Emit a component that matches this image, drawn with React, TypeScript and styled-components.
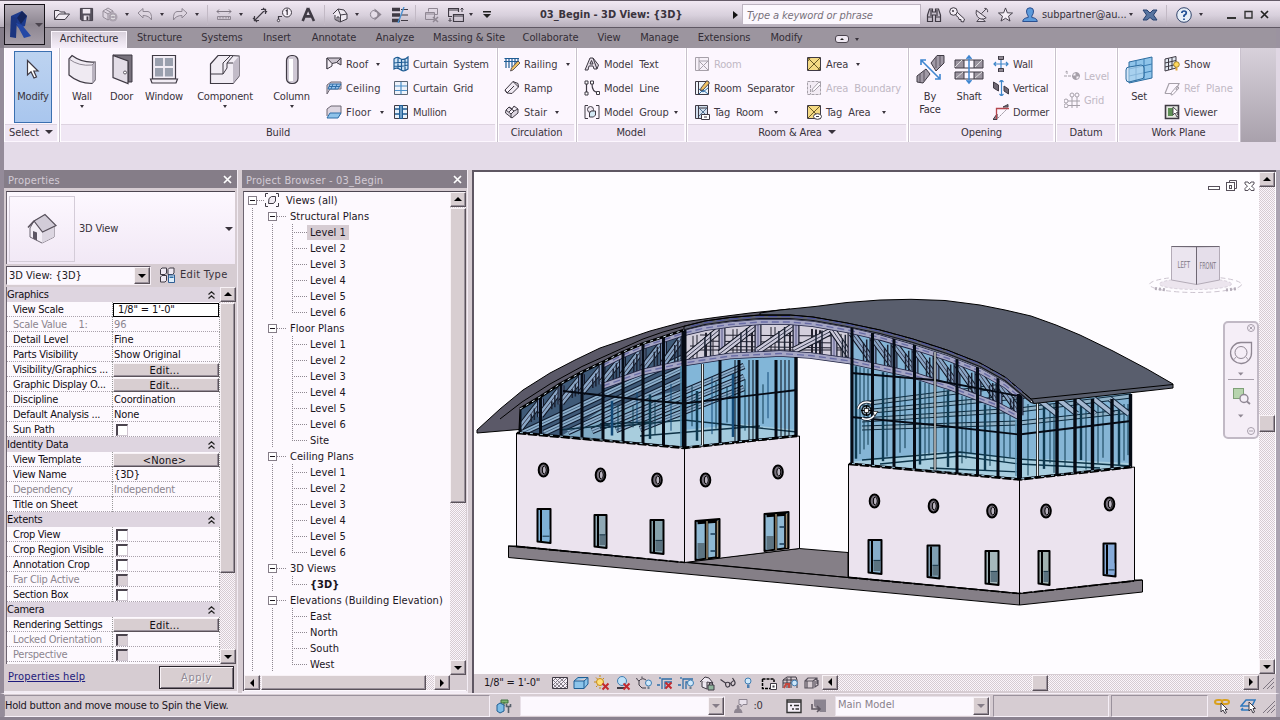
import React from "react";
import styled, { createGlobalStyle, css } from "styled-components";

const Global = createGlobalStyle`
  html, body { margin: 0; padding: 0; }
  body { width: 1280px; height: 720px; overflow: hidden; background: #d6cccf; }
  * { box-sizing: border-box; }
  svg { display: block; flex: none; }
`;

const face = `"DejaVu Sans Condensed", "DejaVu Sans", sans-serif`;
const checker = css`
  background: repeating-conic-gradient(#d6ccd2 0 25%, #fbf5fb 0 50%) 0 0 / 2px 2px;
`;
const raised = css`
  background: #d8ced1;
  border: 1px solid;
  border-color: #f8f2f6 #5a525a #5a525a #f8f2f6;
  box-shadow: inset -1px -1px 0 #99909a;
`;

/* ---------- window ---------- */
const Win = styled.div`
  width: 1280px;
  height: 720px;
  overflow: hidden;
  display: flex;
  flex-direction: column;
  font-family: ${face};
  font-size: 11px;
  font-stretch: condensed;
  letter-spacing: -0.2px;
  color: #38323b;
  border-bottom: 3px solid #8a818f;
  position: relative;
  white-space: pre;
`;
const TitleBar = styled.header`
  height: 28px;
  flex: none;
  display: flex;
  align-items: center;
  padding: 1px 0 0 54px;
  background: linear-gradient(#f1e8f3, #d8d0dc 55%, #b5adb9);
  border-top: 1px solid #655b68;
  border-bottom: 1px solid #5f5864;
`;
const Slot = styled.span<{ $w: number; $l?: number }>`
  width: ${(p) => p.$w}px;
  margin-left: ${(p) => p.$l ?? 0}px;
  display: flex;
  justify-content: center;
  flex: none;
`;
const BarSep = styled.span<{ $l: number }>`
  width: 1px;
  height: 20px;
  margin-left: ${(p) => p.$l}px;
  background: #c2b9c5;
  flex: none;
`;
const Title = styled.b`
  width: 142px;
  margin-left: 54px;
  flex: none;
  letter-spacing: -0.04px;
  color: #3a333d;
`;
const Search = styled.div`
  width: 179px;
  height: 21px;
  margin-left: 4px;
  padding-left: 4px;
  flex: none;
  line-height: 21px;
  font-style: italic;
  color: #77707b;
  background: #fcf8fe;
  border: 1px solid #bdb4c1;
  letter-spacing: -0.1px;
`;
const User = styled.span`
  width: 87px;
  margin-left: 4px;
  flex: none;
  letter-spacing: -0.1px;
`;
const Caret = styled.i<{ $l?: number; $big?: boolean; $c?: string }>`
  width: 0;
  height: 0;
  flex: none;
  margin-left: ${(p) => p.$l ?? 0}px;
  border: ${(p) => (p.$big ? 4 : 2.5)}px solid transparent;
  border-top: ${(p) => (p.$big ? 4 : 3)}px solid ${(p) => p.$c ?? "#39333c"};
  border-bottom: 0;
`;
const AppButton = styled.div`
  position: absolute;
  left: 4px;
  top: 4px;
  width: 41px;
  height: 41px;
  border: 1px solid #17131a;
  background: linear-gradient(#b5adb8, #8d8691 50%, #a59da8);
  display: flex;
  align-items: center;
`;

/* ---------- ribbon ---------- */
const Tabs = styled.nav`
  height: 20px;
  flex: none;
  display: flex;
  align-items: flex-end;
  background: #9c959f;
  border-left: 4px solid #847c89;
  border-right: 4px solid #9b93a0;
  padding-left: 47px;
`;
const Tab = styled.div<{ $w: number; $on?: boolean }>`
  width: ${(p) => p.$w}px;
  height: ${(p) => (p.$on ? 17 : 20)}px;
  line-height: ${(p) => (p.$on ? 13 : 20)}px;
  flex: none;
  text-align: center;
  letter-spacing: -0.1px;
  color: #332d36;
  ${(p) =>
    p.$on &&
    css`
      background: linear-gradient(#d9d1dc, #f7effa);
      border: 1px solid #fbf5fd;
      border-bottom: 0;
      letter-spacing: -0.18px;
    `}
`;
const Pill = styled.div`
  width: 14px;
  height: 8px;
  margin: 0 6px 5px 22px;
  border: 1px solid #4b444e;
  border-radius: 3px;
  background: #efe8f2;
  display: flex;
  align-items: center;
  justify-content: center;
`;
const Up = styled.i`
  border: 2px solid transparent;
  border-bottom-color: #222;
  border-top: 0;
`;
const Ribbon = styled.div`
  height: 94px;
  flex: none;
  display: flex;
  border-left: 4px solid #948b99;
  border-right: 4px solid #e0d7e4;
  background: linear-gradient(#d8d1db, #a9a1ac);
`;
const Panel = styled.section<{ $w: number }>`
  width: ${(p) => p.$w}px;
  flex: none;
  display: flex;
  flex-direction: column;
  background: #fcf6fe;
  border-right: 1px solid #c9c1cd;
  box-shadow: inset -1px 0 0 #fff, inset 1px 0 0 #fff;
`;
const PanelBody = styled.div`
  height: 76px;
  display: flex;
  align-items: flex-start;
`;
const PanelTitle = styled.div`
  height: 17px;
  margin: 0 2px 1px 1px;
  padding-bottom: 2px;
  display: flex;
  align-items: center;
  justify-content: center;
  gap: 6px;
  background: #f0e7f4;
  border-top: 1px solid #ddd3e0;
  letter-spacing: -0.12px;
`;
const Big = styled.div<{ $w: number; $on?: boolean; $l?: number }>`
  width: ${(p) => p.$w}px;
  height: ${(p) => (p.$on ? 72 : 73)}px;
  margin: 3px 0 0 ${(p) => p.$l ?? 0}px;
  padding-top: ${(p) => (p.$on ? 2 : 3)}px;
  flex: none;
  display: flex;
  flex-direction: column;
  align-items: center;
  line-height: 13px;
  text-align: center;
  ${(p) =>
    p.$on &&
    css`
      background: linear-gradient(#bdd3f0, #a9c6ee);
      border: 1px solid #3b6fb0;
    `}
  svg { margin-bottom: 4px; }
`;
const Small = styled.div<{ $dim?: boolean }>`
  height: 24px;
  display: flex;
  align-items: center;
  gap: 4px;
  word-spacing: 3px;
  color: ${(p) => (p.$dim ? "#c0b8c4" : "#3f3943")};
  svg { opacity: ${(p) => (p.$dim ? 0.45 : 1)}; }
`;
const Stack = styled.div<{ $l: number; $w: number; $t?: number; $ls?: number }>`
  width: ${(p) => p.$w}px;
  margin-left: ${(p) => p.$l}px;
  padding-top: ${(p) => p.$t ?? 4}px;
  letter-spacing: ${(p) => p.$ls ?? -0.2}px;
  flex: none;
`;
const OptionStrip = styled.div`
  height: 28px;
  flex: none;
  background: #e4dbe8;
  border: solid #948b99;
  border-width: 0 0 0 4px;
`;

/* ---------- work area ---------- */
const Work = styled.main`
  height: 523px;
  flex: none;
  display: flex;
  gap: 4px;
  background: #d6ccd2;
  border-left: 4px solid #948b99;
  border-right: 4px solid #aca4b2;
`;
const Dock = styled.aside<{ $w: number }>`
  width: ${(p) => p.$w}px;
  flex: none;
  display: flex;
  flex-direction: column;
  border-right: 1px solid #f3ecf4;
  border-bottom: 2px solid #f3ecf4;
`;
const DockHead = styled.div`
  height: 18px;
  flex: none;
  display: flex;
  align-items: center;
  justify-content: space-between;
  padding: 3px 5px 0 4px;
  background: #857d88;
  color: #d3cbd5;
  letter-spacing: 0.18px;
  svg { margin-bottom: 3px; }
`;
const TypeBox = styled.div`
  height: 73px;
  margin: 3px 2px 1px 2px;
  flex: none;
  display: flex;
  align-items: center;
  padding: 1px 2px 0 2px;
  background: linear-gradient(#fdf8ff, #f1e8f5);
  border-top: 1px solid #4d4651;
  border-left: 1px solid #6d6571;
  span { flex: 1; padding-left: 4px; }
`;
const Thumb = styled.div`
  width: 66px;
  height: 66px;
  border: 1px solid #d4ccd8;
  display: flex;
  align-items: center;
  justify-content: center;
`;
const TypeRow = styled.div`
  height: 21px;
  flex: none;
  display: flex;
  align-items: center;
  padding-left: 2px;
  svg { margin: 0 5px 2px 8px; }
`;
const TypeLabel = styled.span`
  margin-bottom: 3px;
  letter-spacing: 0.3px;
`;
const Combo = styled.div<{ $w: number; $dim?: boolean; $h?: number }>`
  width: ${(p) => p.$w}px;
  height: ${(p) => p.$h ?? 19}px;
  flex: none;
  display: flex;
  align-items: stretch;
  justify-content: space-between;
  padding-left: 2px;
  line-height: ${(p) => (p.$h ? 15 : 18)}px;
  background: #fcf8fe;
  color: ${(p) => (p.$dim ? "#89818c" : "#1d181f")};
  letter-spacing: 0;
  border: 1px solid ${(p) => (p.$dim ? "#e8e0e8" : "#5f5763")};
  border-right-color: #f7f0f7;
  border-bottom-color: #f7f0f7;
`;
const Drop = styled.span<{ $w?: number }>`
  width: ${(p) => p.$w ?? 16}px;
  ${raised}
  display: flex;
  align-items: center;
  justify-content: center;
`;
const GridArea = styled.div`
  flex: 1;
  min-height: 0;
  display: flex;
  margin: 1px 2px 0 2px;
`;
const Sheet = styled.div`
  width: 214px;
  background: #fdf9fe;
  border-left: 1px solid #6d6571;
  overflow: hidden;
  letter-spacing: -0.27px;
  color: #120d14;
`;
const Group = styled.div`
  height: 15px;
  display: flex;
  align-items: center;
  justify-content: space-between;
  padding: 0 5px 0 0;
  background: #ded5e0;
`;
const Row = styled.div<{ $dim?: boolean }>`
  height: 15px;
  display: flex;
  line-height: 15px;
  color: ${(p) => (p.$dim ? "#8c858f" : "#120d14")};
  background: repeating-linear-gradient(90deg, #aaa2ac 0 1px, transparent 1px 2px) 0 100% / 100% 1px no-repeat;
`;
const Name = styled.div`
  width: 106px;
  padding-left: 6px;
  flex: none;
  background: repeating-linear-gradient(#999 0 1px, transparent 1px 2px) 100% 0 / 1px 100% no-repeat;
`;
const Value = styled.div`
  width: 107px;
  padding-left: 1px;
  display: flex;
  align-items: center;
  letter-spacing: -0.15px;
  background: repeating-linear-gradient(#999 0 1px, transparent 1px 2px) 100% 0 / 1px 100% no-repeat;
`;
const ValueButton = styled.div`
  width: 106px;
  height: 14px;
  margin-left: -1px;
  text-align: center;
  line-height: 14px;
  padding-right: 3px;
  letter-spacing: 0.2px;
  ${raised}
`;
const ValueField = styled.div`
  width: 106px;
  height: 14px;
  margin-left: -1px;
  padding-left: 4px;
  line-height: 12px;
  border: 1px solid #000;
  background: #fff;
`;
const Check = styled.i<{ $dim?: boolean }>`
  width: 12px;
  height: 12px;
  margin: 1px 0 0 2px;
  background: ${(p) => (p.$dim ? "#d8ced4" : "#fff")};
  border: 1px solid #cfc6d0;
  border-top: 2px solid #4b444e;
  border-left: 2px solid #4b444e;
`;
const DockFoot = styled.div`
  height: 27px;
  flex: none;
  display: flex;
  align-items: center;
  justify-content: space-between;
  padding: 0 3px 0 4px;
  letter-spacing: 0.18px;
  a { color: #1e1b7c; text-decoration: underline; margin-bottom: 3px; }
`;
const Apply = styled.div`
  width: 75px;
  height: 23px;
  ${raised}
  border-color: #2a242c #2a242c #2a242c #2a242c;
  box-shadow: inset 1px 1px 0 #f8f2f6, inset -1px -1px 0 #7a727c;
  text-align: center;
  line-height: 21px;
  color: #918994;
  text-shadow: 1px 1px 0 #fff;
  letter-spacing: 0.6px;
`;

/* ---------- scroll bars ---------- */
const Track = styled.div<{ $v?: boolean; $size: number }>`
  ${checker}
  display: flex;
  flex: ${(p) => (p.$v ? "none" : "1")};
  flex-direction: ${(p) => (p.$v ? "column" : "row")};
  ${(p) => (p.$v ? `width: ${p.$size}px` : `height: ${p.$size}px`)};
`;
const Knob = styled.div<{ $len: number; $v?: boolean }>`
  ${raised}
  flex: none;
  ${(p) => (p.$v ? `height: ${p.$len}px` : `width: ${p.$len}px`)};
`;
const Arrow = styled.div`
  ${raised}
  flex: none;
  width: 16px;
  height: 15px;
  display: flex;
  align-items: center;
  justify-content: center;
`;
const Gap = styled.div<{ $n?: number }>`
  flex: ${(p) => (p.$n === undefined ? "1" : `0 0 ${p.$n}px`)};
`;
const dirs: Record<string, string> = {
  up: "M0 5 4 1 8 5Z",
  down: "M0 2H8L4 6Z",
  left: "M2 4 6 0V8Z",
  right: "M6 4 2 0V8Z",
};
function Bar({ v, size, before, len }: { v?: boolean; size: number; before: number; len: number }) {
  const head = (d: string) => (
    <Arrow>
      <svg width="8" height="8" viewBox="0 0 8 8"><path d={dirs[d]} fill="#000" /></svg>
    </Arrow>
  );
  return (
    <Track $v={v} $size={size}>
      {head(v ? "up" : "left")}
      <Gap $n={before} />
      <Knob $v={v} $len={len} />
      <Gap />
      {head(v ? "down" : "right")}
    </Track>
  );
}

/* ---------- project browser ---------- */
const TreeBox = styled.div`
  flex: 1;
  min-height: 0;
  margin: 3px 1px 0 1px;
  display: flex;
  flex-direction: column;
  background: #fdf9fe;
  border-top: 1px solid #4d4651;
  border-left: 1px solid #6d6571;
`;
const TreeMain = styled.div`
  height: 483px;
  flex: none;
  display: flex;
`;
const TreeFoot = styled.div`
  display: flex;
  background: #d6ccd2;
`;
const TreeList = styled.div`
  width: 206px;
  flex: none;
  overflow: hidden;
  color: #1b151d;
  letter-spacing: 0.05px;
`;
const Node = styled.div`
  height: 16px;
  display: flex;
  align-items: center;
`;
const dots = "repeating-linear-gradient(#8f8891 0 1px, transparent 1px 2px)";
const dash = "repeating-linear-gradient(90deg, #8f8891 0 1px, transparent 1px 2px)";
const Guide = styled.i<{ $w: number; $x: number; $end?: boolean; $arm?: boolean }>`
  width: ${(p) => p.$w}px;
  height: 16px;
  flex: none;
  background: ${(p) =>
    `${dots} ${p.$x}px 0 / 1px ${p.$end ? "8px" : "100%"} no-repeat` +
    (p.$arm ? `, ${dash} ${p.$x}px 8px / 15px 1px no-repeat` : "")};
`;
const Box = styled.i<{ $l: number }>`
  width: 9px;
  height: 9px;
  flex: none;
  margin-left: ${(p) => p.$l}px;
  border: 1px solid #857d88;
  background: linear-gradient(#1b151d, #1b151d) 1px 3px / 5px 1px no-repeat #fff;
`;
/* sits on the vertical guide, so the guide stays visible left of the box */
const Parent = styled(Node)`
  background: ${dots} 8px 0 / 1px 100% no-repeat;
`;
const Arm = styled.i<{ $w: number }>`
  width: ${(p) => p.$w}px;
  height: 1px;
  flex: none;
  background: ${dash};
`;
const Leaf = styled.span<{ $sel?: boolean; $bold?: boolean; $root?: boolean }>`
  padding: 0 3px 0 ${(p) => (p.$root ? 6 : 3)}px;
  height: 15px;
  line-height: 15px;
  font-weight: ${(p) => (p.$bold ? 700 : 400)};
  background: ${(p) => (p.$sel ? "#d6ccd2" : "transparent")};
`;

/* ---------- viewport ---------- */
const View = styled.section`
  width: 804px;
  flex: none;
  display: flex;
  flex-direction: column;
  border-left: 2px solid #5f5763;
  border-top: 2px solid #5f5763;
`;
const ViewMain = styled.div`
  height: 502px;
  flex: none;
  display: flex;
  background: #fefcff;
`;
const Canvas = styled.div`
  width: 785px;
  height: 502px;
  flex: none;
`;
const ViewBar = styled.div`
  height: 17px;
  flex: none;
  display: flex;
  align-items: center;
  padding-left: 10px;
`;
const ScaleText = styled.span`
  width: 66px;
  flex: none;
  color: #1b151d;
`;

/* ---------- status bar ---------- */
const Status = styled.footer`
  height: 24px;
  flex: none;
  display: flex;
  align-items: center;
  background: #d6ccd2;
  border-left: 4px solid #948b99;
  border-right: 4px solid #aca4b2;
  border-top: 1px solid #f6eff7;
`;
const Well = styled.div<{ $w: number; $l?: number }>`
  width: ${(p) => p.$w}px;
  height: 22px;
  margin-left: ${(p) => p.$l ?? 0}px;
  line-height: 20px;
  flex: none;
  letter-spacing: -0.22px;
  color: #1b151d;
  border: 1px solid #f6eff7;
  border-top-color: #9a919c;
  border-left-color: #9a919c;
`;

/* ---------- icons ---------- */
const K = "#3f3a44";
const B = "#2f6ea8";
const glyphs: Record<string, React.ReactNode> = {
  open: <path d="M.5 12.500V3.500H5L6.500 5H11V7M.5 12.500 5 7H15.500L11 12.500Z" fill="#f0eaf2" stroke={K} />,
  save: <><path d="M1.500 1.500H14.500V14.500H3L1.500 13Z" fill="#55505c" stroke={K} /><path d="M4 2H12V7H4ZM5 9H11V14H5Z" fill="#eee8f0" /><path d="M8 10H10V14H8Z" fill={K} /></>,
  sync: <><path d="M1 4 6 1 11 4V10L6 13 1 10ZM1 4 6 7 11 4M6 7V13M4 2.500 9 5.500V11" fill="#ddd5e0" stroke="#968e9a" /><circle cx="11" cy="10" r="4.500" fill="#aba3af" /><path d="M9 9Q11 7 13 9M13 11Q11 13 9 11" stroke="#eee" fill="none" /></>,
  undo: <path d="M1 6 6 1.500V4.500H11Q15 5 14.500 13 12 8.500 6 8.500V11Z" fill="#ddd5e0" stroke="#8f8793" />,
  redo: <path d="M15 6 10 1.500V4.500H5Q1 5 1.500 13 4 8.500 10 8.500V11Z" fill="#ddd5e0" stroke="#8f8793" />,
  measure: <><path d="M1 4.500H15M3 2.500 1 4.500 3 6.500M13 2.500 15 4.500 13 6.500" fill="none" stroke="#7f7783" /><path d="M1.500 9.500H14.500V12.500H1.500ZM4 10V11.500M7 10V11.500M10 10V11.500M12.500 10V11.500" fill="#cfc7d2" stroke="#8f8793" /></>,
  dim: <path d="M2 14 14 2M9 2.500H13.500V7M7 13.500H2.500V9M1 11 5 15M11 1 15 5" fill="none" stroke={K} strokeWidth="1.200" />,
  tag: <><circle cx="11" cy="5.500" r="4.500" fill="#f7f1f9" stroke={K} /><path d="M2.500 13V9.500H6M9.800 4 11.200 3V8" fill="none" stroke={K} strokeWidth="1.200" /><circle cx="2.500" cy="13.500" r="1.200" fill="#f7f1f9" stroke={K} /></>,
  textA: <path d="M7.500 1 1.800 15M7.500 1 13.800 15M4 10H11.500" fill="none" stroke={K} strokeWidth="2.800" />,
  house: <><path d="M1 7 6 2 12 3 15 7V12L8 15 3 12.500V8" fill="#efe9f1" stroke={K} /><path d="M1 7 6 2 8.500 8V15M8.500 8 15 7M5 13V10H7V14" fill="none" stroke={K} /></>,
  section: <><circle cx="7" cy="8" r="4.500" fill="none" stroke="#8d8591" /><path d="M7 1.500V14.500L14.500 8Z" fill="#8d8591" /><circle cx="7" cy="8" r="3" fill="#e5dde8" /></>,
  thin: <><path d="M0 2.500H8M0 8H8M0 13.500H8" stroke={K} strokeWidth="3.500" /><path d="M9 2.500H16M9 8H16M9 13.500H16" stroke={K} /><path d="M12 0 6 16" stroke="#4a90d0" strokeWidth="1.400" /></>,
  closeWin: <><path d="M4.500 4.500V1.500H13.500V7.500H11M1.500 5.500H10.500V12.500H1.500ZM2 7H10" fill="none" stroke="#8f8793" /><path d="M9 10 14 15M14 10 9 15" stroke="#8f8793" strokeWidth="1.500" /></>,
  switchWin: <><path d="M10.500 5V1.500H.5V9.500H4M1 3H10M5.500 7.500H15.500V14.500H5.500ZM6 9H15" fill="none" stroke={K} strokeWidth="1.200" /><path d="M14 1V5M12.500 2.500 14 1 15.500 2.500M2 11V14M.5 13 2 14.500 3.500 13" fill="none" stroke={K} /></>,
  binoc: <path d="M1.500 14.500V8L3.500 2H6.500V5H9.500V2H12.500L14.500 8V14.500H9.500V8H6.500V14.500ZM1.500 10H6.500M9.500 10H14.500M5 3V9M11 3V9" fill="#c7bfcb" stroke={K} strokeWidth="1.200" />,
  key: <><circle cx="4.500" cy="4.500" r="3.800" fill="#f2ecf4" stroke={K} /><path d="M7 7 8.500 5.500 15.500 12 14.500 15 12 14.500 12 12.500 10 12.500 9.500 10.500 7 8.500Z" fill="#f2ecf4" stroke={K} /><circle cx="4" cy="4" r="1" fill={K} /></>,
  dish: <><path d="M2.500 3.500 13 11.500Q7 15 3.500 10 1.500 7 2.500 3.500ZM6 12 3 15.500H12L9 12.500" fill="#e6dfe9" stroke={K} /><path d="M8 7 13 2M11 1.500Q15 1 14.500 5.500" stroke={K} fill="none" /></>,
  star: <path d="M8 1 10 6.200 15.500 6.400 11.200 9.800 12.800 15 8 12 3.200 15 4.800 9.800.5 6.400 6 6.200Z" fill="#f4eef6" stroke={K} />,
  user: <><path d="M4.500 4Q4.500 .8 8 .8 11.500 .8 11.500 4 11.500 7 9.800 9V10.500Q15 11 15.300 14.500H.7Q1 11 6.200 10.500V9Q4.500 7 4.500 4Z" fill="#5c9adb" stroke="#2b4f8f" /></>,
  exchange: <path d="M1 3H5L8 6 11 3H15L11.500 8 15 13H11L8 10.500 5 13H1L4.500 8Z" fill="#56739f" stroke="#26406f" />,
  help: <><circle cx="8" cy="8" r="7.300" fill="#e6eef8" stroke="#33456c" /><path d="M5.800 6Q6 4 8 4 10.300 4 10.300 6 10.300 7.200 8 8.500V10M8 11.500V13" fill="none" stroke="#1d4d94" strokeWidth="1.700" /></>,
  roof: <><path d="M1 2H15V9L10.500 6.500 6 7.500 1 13Z" fill="#cbc4cf" stroke={K} /><path d="M1 2 6 7.500V10L1 13ZM10.500 6.500 15 2" fill="#f4eef6" stroke={K} /></>,
  ceiling: <><path d="M1 14V5L5 2H15V9L12 9H4Z" fill="#d9d2dd" stroke="#6d6672" /><path d="M4 4H15L12 9H2Z" fill="#9cc6ee" stroke={B} /><path d="M7 4 5 9M11 4 9 9M3 6.500H13" stroke={B} /></>,
  floor: <><path d="M1 12V5L5 2H15V9L12 13" fill="#ddd6e1" stroke="#6d6672" /><path d="M4 9H15L12 14H1Z" fill="#8fc3ea" stroke={B} /></>,
  csys: <path d="M1 3Q4 0 7 2.500 11 5 15 1V13Q11 16 8 14 4 11 1 13ZM5 1V13M8.500 3V14M12 3V15M1 7Q8 6 15 6M1 10Q8 11 15 9" fill="#cfe4f6" stroke="#1f5c94" strokeWidth="1.200" />,
  cgrid: <><path d="M1.500 1.500H14.500V14.500H1.500Z" fill="#eff3fa" stroke="#5b6675" /><path d="M8 2V14M2 6H14M2 10.500H14" stroke="#4c8fc8" strokeWidth="1.200" /></>,
  mullion: <><path d="M1.500 1.500H14.500V14.500H1.500Z" fill="#e8f1fa" stroke={K} /><path d="M8 1V15" stroke="#1f5c94" strokeWidth="4" /><path d="M2 5H14M2 10H14" stroke="#1f5c94" strokeWidth="1.600" /><path d="M8 2V14" stroke="#bfe0fa" /></>,
  railing: <><path d="M.5 2.500H15M2 3V12M5 3V12M8 3V11M11 3V9M14 3V6M0 5.500H15" stroke="#1f5c94" strokeWidth="1.200" /><path d="M14 5 16 7 9 14 6.500 15 7.500 12Z" fill="#f2c261" stroke={K} strokeWidth=".8" /></>,
  ramp: <path d="M1 10 9 1.500 14 3.500 14.500 7 8 13.500 3 13ZM9 1.500 14.500 7M1 10 3 13 10 6" fill="#efe9f2" stroke={K} />,
  stair: <path d="M2 6 5 3 8 5 10 2 14 5V9L8 14 1.500 9ZM5 3 10 7 14 5M2 6 7 10 10 7M5 8 8 5M7 10V14" fill="#ddd6e1" stroke={K} />,
  mtext: <path d="M1 14 6 2 9 2 14.500 9 13 13 10 13 9 10 5 10 4 14ZM6 8 7.500 4.500 9 8ZM9 2 13 13" fill="#e3dce6" stroke={K} />,
  mline: <><path d="M2.500 4V12M8 4Q8 12 14 12.500" stroke={K} fill="none" strokeWidth="1.200" /><path d="M1 1H4V4H1ZM1 12H4V15H1ZM6.500 1H9.500V4H6.500ZM12.500 11.500H15.500V14.500H12.500Z" fill="#fff" stroke={K} /></>,
  mgroup: <><path d="M4 1.500H1V14.500H4M12 1.500H15V14.500H12" fill="none" stroke={K} /><circle cx="6.500" cy="5.500" r="3" fill="#eee8f1" stroke={K} /><path d="M7 7H11.500V11L9.500 13H5.500V9Z" fill="#d4eaf6" stroke={K} /></>,
  room: <><path d="M1.500 1.500H14.500V14.500H1.500ZM5 1V14M5 5H14" fill="#efe9f2" stroke={K} /><path d="M5 5 14 14M14 5 5 14" stroke={K} /></>,
  roomsep: <><path d="M1.500 1.500H14.500V14.500H1.500ZM4.500 1V14" fill="#eef4fa" stroke={K} /><path d="M5 9 9 12 14 8M5 14 9 10 14 14" stroke="#2f6ea8" fill="none" /><path d="M13 .5 15.500 3 9 10 6.500 10.500 7 8Z" fill="#f2c261" stroke={K} strokeWidth=".9" /></>,
  tagroom: <><path d="M1.500 1.500H13.500V14.500H1.500ZM4.500 1V14M5 4H13" fill="#d2dfee" stroke={K} /><path d="M5 4 13 12M13 4 5 12" stroke="#51708f" /><path d="M7.500 10.500H15.500V15.500H7.500ZM10 13H13" fill="#fff" stroke={K} /></>,
  area: <><path d="M1.500 1.500H14.500V14.500H1.500Z" fill="#f5da84" stroke={K} /><path d="M2 2 14 14M14 2 2 14M4 2 2 5M12 14 14 11" stroke="#6b5a25" /></>,
  areab: <><path d="M1.500 1.500H14.500V14.500H1.500ZM4.500 5V14" fill="#e6dfe9" stroke={K} strokeDasharray="3 1" /><path d="M13 2 15 4 8 11 6 11.500 6.500 9Z" fill="#fff" stroke={K} /></>,
  tagarea: <><path d="M1.500 1.500H14.500V14.500H1.500Z" fill="#f5da84" stroke={K} /><path d="M2 2 14 14M14 2 2 14" stroke="#6b5a25" /><ellipse cx="11.500" cy="12.500" rx="4" ry="2.800" fill="#fff" stroke={K} /><path d="M10 12.500H13" stroke={K} /></>,
  owall: <><path d="M5.500 0V3.500H10.500V0ZM5.500 16V12.500H10.500V16Z" fill="#8f8893" stroke={K} /><path d="M1 8H15M8 4V12M3 6 1 8 3 10M13 6 15 8 13 10" fill="none" stroke="#3f86c9" strokeWidth="1.200" /></>,
  overt: <><path d="M.5 2 5.500 5V11L.5 8ZM11 6 15.500 9V14L11 11Z" fill="#6f6874" stroke={K} /><path d="M8.500 0V16M6.500 2 8.500 0 10.500 2M6.500 14 8.500 16 10.500 14" fill="none" stroke="#3f86c9" strokeWidth="1.200" /></>,
  dormer: <><path d="M0 15.500 4 10V15.500ZM10 3 15 .5V3Z" fill="#8f8893" stroke={K} /><path d="M3.500 15V4.500H16" fill="none" stroke="#b5454d" strokeWidth="1.300" /><path d="M5 14 14 5" stroke="#8f8893" strokeDasharray="2 1" /></>,
  level: <><path d="M0 8H9M3 3V6M1.500 4 3 3" stroke={K} strokeDasharray="3 1" /><circle cx="12" cy="8" r="3.500" fill="none" stroke={K} /><path d="M12 4.500V11.500M8.500 8H15.500" stroke={K} /><path d="M12 8V4.500A3.500 3.500 0 0 1 15.500 8ZM12 8V11.500A3.500 3.500 0 0 1 8.500 8Z" fill={K} /></>,
  grid: <><path d="M8 5V16M13 5V16M4 9H16M4 13.500H16" stroke={K} /><circle cx="8" cy="3" r="2" fill="none" stroke={K} /><circle cx="13" cy="3" r="2" fill="none" stroke={K} /><circle cx="2" cy="9" r="2" fill="none" stroke={K} /><circle cx="2" cy="13.800" r="2" fill="none" stroke={K} /></>,
  show: <><path d="M1 3 12 .5V12L1 15ZM4.500 2.500V14M8 1.500V13M1 7 12 4.500M1 11 12 8.500" fill="#e3eaf3" stroke={K} /><circle cx="12.500" cy="8.500" r="2.800" fill="#ffd85c" stroke="#8d6f1a" strokeWidth=".8" /><path d="M11.500 11.500H13.500V14.500H11.500Z" fill="#e2a93a" /></>,
  refp: <><path d="M1 13.500 5 3.500H15L12 10M1 13.500H7" fill="none" stroke={K} strokeWidth="1.200" /><path d="M13 6 15 8 9 14.500 7 15 7.500 12.500Z" fill="none" stroke={K} /></>,
  viewer: <><path d="M1.500 1.500H14.500V14.500H1.500Z" fill="#e6e8e2" stroke={K} strokeWidth="1.600" /><path d="M4 4H9V12H4Z" fill="#5e8f56" /><path d="M9 3V11L11 9 13 13 14.500 12 12.500 8.500H15Z" fill="#fff" stroke={K} strokeWidth=".9" /></>,
  etype: <><path d="M1.500 2.500 3 1H7.500V6L6 7.500H1.500ZM9 2.500 10.500 1H15V6L13.500 7.500H9ZM1.500 10 3 8.500H7.500V13.500L6 15H1.500Z" fill="#efe9f2" stroke={K} /><path d="M9.500 8H15.500V15.500H9.500Z" fill="#dcecf8" stroke="#2f5e94" /><path d="M10.500 9.500H14.500V11H10.500Z" fill={B} /></>,
  views: <><path d="M4 1.500H1.500V5M12 1.500H14.500V5M1.500 11V14.500H4M14.500 11V14.500H12" fill="none" stroke={K} /><path d="M5 6.500 7.500 4.500H11.500V9L9.500 11.500H4.500Z" fill="#f2ecf4" stroke={K} /></>,
  hatch: <><path d="M.5 2.500H15.500V13.500H.5Z" fill="#f5eff7" stroke={K} /><path d="M1 6 4 3M1 10 8 3M1 13 12 3M5 13 15 3M9 13 15 7M13 13 15 11M3 3 13 13M8 3 15 10M1 5 9 13M1 9 5 13" stroke="#77707c" strokeWidth=".9" /></>,
  cube: <path d="M1 6 5 2.500H15V9L11 13.500H1ZM1 6H11L15 2.500M11 6V13.500" fill="#8cc4ea" stroke="#205f94" />,
  sun: <><circle cx="6" cy="7" r="3.500" fill="#ffe07a" stroke="#c78a12" /><path d="M6 0V2M0 7H2M2 2.500 3.500 4M2 12 3.500 10.500M6 12V14M10 3 9 4" stroke="#c78a12" /><path d="M8.500 8.500 14.500 14.500M14.500 8.500 8.500 14.500" stroke="#c22a30" strokeWidth="2" /></>,
  shadow: <><circle cx="7" cy="6" r="4.500" fill="#bfe0f7" stroke="#3f7eb3" /><path d="M2 13H10" stroke={K} strokeWidth="2" /><path d="M8.500 8.500 14.500 14.500M14.500 8.500 8.500 14.500" stroke="#c22a30" strokeWidth="2" /></>,
  teapot: <><path d="M3 6Q1 5 .5 3M3 6Q6 2 10 5M3 6V10L6 13H10M6 3V1.500" fill="none" stroke={K} /><circle cx="12.500" cy="8" r="3" fill="#cfe8fa" stroke="#3f7eb3" /><path d="M11.500 11.500H13.500V14H11.500Z" fill="#6d7d8d" /></>,
  crop: <><path d="M0 10H3M5 14V4H15M8 14V7H15M3 4V2" fill="none" stroke={B} strokeWidth="1.300" /><path d="M8.500 7.500 14.500 13.500M14.500 7.500 8.500 13.500" stroke="#c22a30" strokeWidth="2" /></>,
  cropb: <><path d="M0 10H3M5 14V4H15M8 14V7H10M3 4V2" fill="none" stroke={B} strokeWidth="1.300" /><circle cx="12.500" cy="8" r="3" fill="#cfe8fa" stroke="#3f7eb3" /><path d="M11.500 11.500H13.500V14H11.500Z" fill="#6d7d8d" /></>,
  lock: <><path d="M1 7 6 2 10 3 14 8M3 6V12L8 14V7M8 7 14 8" fill="#efe9f2" stroke={K} /><path d="M9 10H15V15H9Z" fill="#8fb59c" stroke={K} /><path d="M10.500 10V8H13.500V10" fill="none" stroke={K} /></>,
  glasses: <path d="M.5 4.500 5.500 8Q5.500 12.500 8 12 10.500 11.500 9.500 8 8 6.500 5.500 8M9.500 8.500 11 8Q11.500 11.500 13.500 10.500 16 9 14.500 6 13 5 11 8M14.800 6.500 12.500 3" fill="none" stroke={K} strokeWidth="1.200" />,
  bulb: <><circle cx="8" cy="6" r="3" fill="#cfe8fa" stroke="#3f7eb3" /><path d="M7 9.500H9.500V13H7Z" fill="#4a7db0" /></>,
  marquee: <><path d="M1.500 4V13.500H9M1.500 4H13V7" fill="none" stroke="#000" strokeWidth="1.500" strokeDasharray="3 1" /><path d="M9.500 8.500H15.500V14.500H9.500Z" fill="#fff" stroke={K} /><path d="M11.500 10.500H13.500V12.500H11.500Z" fill={K} /></>,
  analytic: <><path d="M1 5 5 2H14L15 5V13M1 5V13M1 8H14M5 3V13M9 2V13M1 5H14" fill="none" stroke={K} /><path d="M2 13 4 9 7 9 7 13" fill="none" stroke="#c4483f" strokeWidth="2" /><circle cx="12.500" cy="8" r="2.800" fill="#cfe8fa" stroke="#3f7eb3" /></>,
  displace: <path d="M2 6 5 3H14V9M2 6H10V13H2ZM10 6 14 3M4 6V13M12 6V12L15 10V5" fill="none" stroke="#56505b" strokeWidth="1.200" />,
  worksets: <><path d="M5 2H12V5H5ZM8 4V8" fill="#7fb56e" stroke="#3e7040" /><path d="M1 7 4 5 8 7V13L4 15 1 13Z" fill="#7dbce6" stroke="#205f94" /><path d="M12.500 9V15M10.500 6V8.500H14.500V6" fill="none" stroke="#56606b" strokeWidth="1.600" /></>,
  editreq: <><path d="M6 1.500H14V6.500H10L8 9V6.500H6Z" fill="#e9e2ec" stroke="#8d8591" /><path d="M1 15Q1 11 4 10.500 3 7 5 7 7 7 6.500 10.500 9 11 9.500 15Z" fill="#8d8591" /></>,
  options: <><path d="M1 2H15V14.500H1Z" fill="#f5eff7" stroke="#333" strokeWidth="1.400" /><path d="M1 4H15" stroke="#333" strokeWidth="1.500" /><path d="M4 7.500H6M8 7.500H13M6 11H8M9.500 11H13" stroke="#333" strokeWidth="1.300" /></>,
  addopt: <><path d="M3 1.500H15V14H9L3 8Z" fill="#8b8490" /><path d="M1 6V11H8M6 8 9 11 6 14" fill="none" stroke="#5f5863" strokeWidth="1.600" /></>,
  links: <><path d="M1 4Q1 2 4 2H6Q8 2 8 4 8 6 6 6H4Q1 6 1 4ZM8 4Q8 2 10 2H12Q15 2 15 4 15 6 12 6H10Q8 6 8 4Z" fill="none" stroke="#d9a01e" strokeWidth="2" /><path d="M7 5V14L9 12 11 15.500 12.500 14.500 11 11.500H13.500Z" fill="#fff" stroke={K} /></>,
  under: <><path d="M1 8 6 2H15L12 8ZM1 12H10M3 10 1 12" fill="none" stroke="#2f78bd" strokeWidth="1.500" /><path d="M9 4V13L11 11 13 15 14.500 14 13 10.500H15.500Z" fill="#fff" stroke={K} /></>,
};
const Icon = ({ n, s = 16 }: { n: string; s?: number }) => (
  <svg width={s} height={s} viewBox="0 0 16 16">{glyphs[n]}</svg>
);

const bigGlyphs: Record<string, React.ReactNode> = {
  modify: <path d="M10.500 6.500V21L14 17.800 17 24 19.500 23 16.800 17H21Z" fill="#fff" stroke={K} strokeWidth="1.200" />,
  wall: <><path d="M3 5 6 1.500Q16 9 29 8V26L26 29.500Q12 29 3 21Z" fill="#efeaf2" stroke={K} strokeWidth="1.200" /><path d="M26 11 29 8V26L26 29.500Z" fill="#b9b2bf" /><path d="M3 5Q13 12.500 26 11L29 8" fill="none" stroke="#8d8692" /></>,
  door: <><path d="M7 1H26V28H22V8L7 1Z" fill="#77717c" stroke={K} /><path d="M7 1.500 22 7V29.500L7 23.500Z" fill="#e3dde7" stroke={K} strokeWidth="1.200" /><circle cx="19" cy="18.500" r="1.500" fill="#fff" stroke={K} strokeWidth=".8" /></>,
  window: <><path d="M4.500 1.500H27.500V25H4.500Z" fill="#f2edf5" stroke={K} strokeWidth="1.200" /><path d="M7 4H25V22.500H7Z" fill="#9aa0ae" /><path d="M16 4V23M7 13H25" stroke="#f2edf5" strokeWidth="1.800" /><path d="M2.500 25H29.500L28 29H4Z" fill="#f2edf5" stroke={K} strokeWidth="1.200" /></>,
  component: <><path d="M1.500 10 9 1.500H22L30 2V22L24 29.500H1.500Z" fill="#f1ecf4" stroke={K} strokeWidth="1.200" /><path d="M24 9 30 2V22L24 29.500Z" fill="#c2bbc8" /><path d="M1.500 20H14V9L21 2M18 9 24 2M18 9H24M18 9V14L14 20" fill="none" stroke={K} /></>,
  column: <><rect x="10.500" y="1.500" width="11.500" height="28" rx="5" fill="#cfc8d4" stroke={K} strokeWidth="1.200" /><path d="M15 5V27" stroke="#fff" strokeWidth="4" /></>,
  byface: <><path d="M3 22 12 15 16 20 9 29 3 28ZM17 9 23 1.500H30V9L22 17Z" fill="#a19aa6" stroke={K} /><path d="M6 20V28M10 17V27M22 3V14M26 2V12" stroke="#5c5560" /><path d="M7 6 26 25M7 11V6H12M26 20V25H21" fill="none" stroke="#3f86d0" strokeWidth="1.600" /></>,
  shaft: <><path d="M2 6H11V14H2ZM21 6H30V14H21ZM2 18H11V25H2ZM21 18H30V25H21Z" fill="#9b94a0" stroke={K} /><path d="M2 13 9 6M22 13 29 6M3 24 10 18M22 24 29 18" stroke="#ddd" /><path d="M11 6H21M11 14H21M11 18H21M11 25H21" stroke={K} /><path d="M16 2V29M13.500 5 16 2 18.500 5M13.500 26 16 29 18.500 26" fill="none" stroke="#3f86d0" strokeWidth="1.500" /></>,
  set: <><path d="M6 8 29 3V24L6 29Z" fill="#8fc4ea" stroke="#2d6c9f" /><path d="M13 6.500V27M21 5V26M6 15 29 10M6 22 29 17" stroke="#3c7fb5" /><path d="M3 16Q3 13 6 13L18 11Q21 11 21 14V22Q21 25 18 25L6 28Q3 28 3 25Z" fill="#b9daf2" fillOpacity=".6" stroke="#2d6c9f" /></>,
};
const BigIcon = ({ n }: { n: string }) => (
  <svg width="32" height="32" viewBox="0 0 32 32">{bigGlyphs[n]}</svg>
);
const Close = ({ c = "#fff", s = 9 }: { c?: string; s?: number }) => (
  <svg width={s} height={s} viewBox="0 0 9 9"><path d="M1 1 8 8M8 1 1 8" stroke={c} strokeWidth="1.700" /></svg>
);

/* ---------- 3D model ---------- */
type P = [number, number];
const lerp = (pts: P[], x: number) => {
  for (let i = 1; i < pts.length; i++) {
    if (x <= pts[i][0]) {
      const [a, b] = [pts[i - 1], pts[i]];
      return a[1] + ((b[1] - a[1]) * (x - a[0])) / (b[0] - a[0]);
    }
  }
  return pts[pts.length - 1][1];
};
const str = (p: P[]) => p.map((q) => q.join(",")).join(" ");

const roofTop: P[] = [[477, 430], [500, 409], [523, 390], [550, 373], [575, 360], [600, 348], [625, 339.5], [650, 331], [683, 322], [715, 317.5], [750, 313], [780, 310], [815, 306.5], [847, 302.5], [880, 300], [911, 299.3], [945, 300.5], [980, 305], [1005, 310], [1031, 316], [1056, 325], [1080, 335], [1113, 351], [1147, 369], [1173, 384]];
const roofEdge: P[] = [[477, 433], [500, 419], [522, 402], [550, 384], [582, 366.5], [603, 357], [623, 348], [643, 339], [663, 332], [683, 326.5], [705, 321], [730, 317.5], [760, 315], [790, 315], [813, 317], [847, 323], [880, 330], [913, 339], [947, 350], [980, 363], [1005, 377], [1031, 399]];
const glassTop: P[] = [[520, 409], [540, 397], [560, 384], [582, 372], [603, 362], [623, 352], [643, 343.5], [663, 337], [684, 330], [705, 325], [730, 321.5], [760, 319], [790, 319], [813, 321], [850, 327.5], [880, 334.5], [913, 344], [947, 355], [980, 368], [1005, 382], [1027, 400]];
const chord: P[] = [[520, 432], [560, 407], [603, 386], [643, 372], [684, 363], [730, 356], [780, 353.5], [810, 355.5], [850, 361], [910, 374], [947, 386], [997, 405], [1027, 421]];
const seg = (pts: P[], a: number, b: number): P[] => [[a, lerp(pts, a)], ...pts.filter((p) => p[0] > a && p[0] < b), [b, lerp(pts, b)]];

function Truss({ a, b, step, flip, faint }: { a: number; b: number; step: number; flip?: boolean; faint?: boolean }) {
  const out: React.ReactNode[] = [];
  for (let x = a; x < b - 4; x += step) {
    const e = Math.min(x + step, b);
    const [x1, x2] = flip ? [x, e] : [e, x];
    const y1 = lerp(glassTop, x1) + 5;
    const y2 = lerp(chord, x2) - 4;
    out.push(
      <g key={x}>
        <path d={`M${x1} ${y1}L${x2} ${y2}`} stroke="#0e1320" strokeWidth="7.4" />
        <path d={`M${x1} ${y1}L${x2} ${y2}`} stroke={faint ? "#8aa6c6" : "#cbc9da"} strokeWidth="5.4" />
        <path d={`M${x1} ${y1}L${x2} ${y2}`} stroke="#3a3e52" strokeWidth="1" />
        <path d={`M${x + step * 0.55} ${lerp(glassTop, x + step * 0.55) + 12}V${lerp(chord, x + step * 0.55) - 3}M${x + step * 0.7} ${lerp(glassTop, x + step * 0.7) + 8}V${lerp(chord, x + step * 0.7) - 3}`} stroke="#1b2233" strokeWidth="1.5" />
        <path d={`M${e} ${lerp(glassTop, e) + 2}V${lerp(chord, e) - 2}`} stroke="#161b2c" strokeWidth="7" />
        <path d={`M${e} ${lerp(glassTop, e) + 2}V${lerp(chord, e) - 2}`} stroke={faint ? "#7f98c0" : "#b4b2ce"} strokeWidth="4.6" />
        <path d={`M${e} ${lerp(glassTop, e) + 2}V${lerp(chord, e) - 2}`} stroke="#5b5d8c" strokeWidth="1" />
      </g>
    );
  }
  return <>{out}</>;
}

const leftBase = (x: number) => (x <= 685 ? 433 + ((x - 516) * 15) / 169 : 448 - ((x - 685) * 12) / 114);
const rightBase = (x: number) => (x <= 1019 ? 464 + ((x - 848) * 15.5) / 171 : 479.5 - ((x - 1019) * 12) / 115);

function Building() {
  const mullL = [520, 540.5, 561, 582, 603, 623, 643, 663.5];
  const mullR = [852, 872.5, 894, 914.5, 957, 977.5, 998];
  const ports: P[] = [[543.5, 470], [600.5, 475], [657, 480], [705.5, 480], [778, 472], [874.5, 501], [933.5, 506], [992, 511], [1046, 511], [1109.5, 504]];
  const wins: [number, number, number, number, string][] = [
    [537.5, 509, 13, 34, "#7fb2d6"], [594.5, 515, 12, 33, "#8fa9b5"], [650.5, 520, 13, 34, "#86a3ac"],
    [868.5, 540, 13, 34, "#86adc9"], [927.5, 545.5, 12, 33, "#7f9fb2"], [985.5, 551, 13, 34, "#a5b8bc"],
    [1038.5, 551, 11, 34, "#a0b2b0"], [1103.5, 543.5, 12, 33, "#86abd9"],
  ];
  const beams = [0, 1, 2, 3, 4, 5].map((i) => `M${520 + i * 24} ${434 - i}L${684 + (i > 2 ? 60 : 0)} ${357 + i * 11 - (i > 2 ? 24 : 0)}`);
  const joists = [0, 1, 2, 3].map((i) => `M862 ${404 + i * 8}L1019 ${384 + i * 13}L1131 ${366 + i * 15}`);
  return (
    <g strokeLinejoin="round">
      {/* slab */}
      <polygon points="508.5,546 516,546 685,562 799,548.5 848,552.5 848,577 1019,593 1134,580 1142.5,580 1142.5,592 1019.5,605 508.5,557.5" fill="#857f87" stroke="#000" />
      <path d="M685 562 848 577.5M1019.5 593V605M508 546 848 577.5 1019.5 593.5 1142 580" stroke="#000" fill="none" />

      {/* left glazing */}
      <polygon points={str([...seg(glassTop, 520, 684), [684, 448], [520, 433.5]])} fill="#3f5a78" />
      <polygon points="560,437 603,409 684,389 684,448" fill="#7fa9c4" />
      <polygon points="603,428 684,418 684,448 603,440" fill="#a8cddd" />
      <polygon points={str([...seg(chord, 684, 797), [797, 436], [684, 448]])} fill="#82b6d8" />
      <polygon points="684,430 740,424 797,430 797,436 684,448" fill="#a3cadd" />
      <g fill="none">
        {beams.map((d) => (
          <g key={d}>
            <path d={d} stroke="#101c30" strokeWidth="6.6" />
            <path d={d} stroke="#8fb0cc" strokeWidth="4.2" />
            <path d={d} stroke="#34506e" strokeWidth=".8" />
          </g>
        ))}
        <path d="M600 428 684 420 797 432M600 424 650 422M640 436 760 426M560 430 610 425" stroke="#0e3246" strokeWidth="1.3" />
        {[612, 618, 633, 637, 650, 655, 671, 692, 697, 712, 716, 727, 733, 745, 763, 768].map((x, i) => (
          <path key={x} d={`M${x} ${lerp(chord, x) + 18 + (i % 3) * 6}V${leftBase(x) - 6 - (i % 4) * 5}`} stroke={i % 3 ? "#0f3a50" : "#134a78"} strokeWidth={i % 4 === 0 ? 2.5 : 1} />
        ))}
      </g>
      <Truss a={520} b={684} step={20.5} faint />

      {/* gate truss */}
      <polygon points={str([...seg(glassTop, 684, 851), ...seg(chord, 684, 851).reverse()])} fill="#d3cfdc" />
      <path d="M690 350H845M690 346 845 348M700 335 840 336M700 341 840 343" stroke="#20202e" fill="none" />
      <g stroke="#23222f">
        {[693, 697, 706, 713, 733, 737, 752, 771, 775, 790, 812, 816, 820, 836, 841].map((x) => (
          <path key={x} d={`M${x} ${lerp(glassTop, x) + 8}V${lerp(chord, x) - 3}`} strokeWidth={x % 2 ? 1 : 2} />
        ))}
      </g>
      <Truss a={684} b={722} step={38} />
      <Truss a={720} b={796} step={38} />
      <Truss a={794} b={834} step={40} />
      <Truss a={832} b={851} step={19} flip />

      {/* right glazing */}
      <polygon points={str([...seg(glassTop, 850, 1020), [1031, 402], [1131, 392], [1131, 467], [1019, 479.5], [850, 464]])} fill="#85b5d5" />
      <polygon points="850,462 935,452 1019,458 1131,463 1131,467 1019,479.5 850,465" fill="#a8cedf" />
      <g fill="none">
        {joists.map((d) => (
          <g key={d}>
            <path d={d} stroke="#0f2b3e" strokeWidth="5" />
            <path d={d} stroke="#90b2c8" strokeWidth="3" />
          </g>
        ))}
        <path d="M862 460 960 452 1019 459 1131 466M880 464 960 456 1019 464 1100 468M930 468 1019 472" stroke="#0c3448" strokeWidth="1.3" />
        {[856, 860, 864, 868, 883, 887, 900, 905, 920, 925, 929, 944, 948, 962, 966, 971, 985, 990, 1004, 1010].map((x, i) => (
          <path key={x} d={`M${x} ${lerp(chord, x) + 4}V${rightBase(x) - 6 - (i % 4) * 5}`} stroke="#0f3a50" strokeWidth={i % 4 === 0 ? 2.4 : 1} />
        ))}
        {[1028, 1044, 1050, 1054, 1065, 1081, 1086, 1098, 1103, 1119, 1124, 1128].map((x, i) => (
          <path key={x} d={`M${x} 404V${rightBase(x) - 3 - (i % 3) * 5}`} stroke="#0f3a50" strokeWidth={i % 4 === 1 ? 2.4 : 1} />
        ))}
        {[1038, 1058, 1076, 1094, 1110].map((x) => (
          <g key={x}>
            <path d={`M${x} 399L${x + 19} 414`} stroke="#12263c" strokeWidth="6" />
            <path d={`M${x} 399L${x + 19} 414`} stroke="#a4b8d0" strokeWidth="4" />
          </g>
        ))}
      </g>
      <Truss a={852} b={1020} step={21} flip faint />

      {/* chords */}
      {[seg(chord, 603, 1020), seg(glassTop, 603, 1020).map(([x, y]) => [x, y + 3] as P)].map((c, i) => (
        <g key={i} fill="none">
          <polyline points={str(c)} stroke="#1e2140" strokeWidth={i ? 6 : 6.6} />
          <polyline points={str(c)} stroke="#a5a6c4" strokeWidth={i ? 4.4 : 5} />
          <polyline points={str(c)} stroke="#6a6da6" strokeWidth="1.4" strokeDasharray="7 4" />
        </g>
      ))}

      {/* mullions */}
      <g stroke="#050a14" fill="none">
        {mullL.map((x) => <path key={x} d={`M${x} ${lerp(glassTop, x)}V${leftBase(x)}`} strokeWidth="3" />)}
        <path d="M684 330V448" strokeWidth="5" />
        <path d="M681 366V446" stroke="#4a86a8" strokeWidth="1.6" />
        {[720, 739, 757, 776].map((x) => <path key={x} d={`M${x} 360V${leftBase(x)}`} strokeWidth="3" />)}
        {[735, 749, 753, 781, 785, 789].map((x) => <path key={x} d={`M${x} 360V${leftBase(x)}`} />)}
        <path d="M796 357V436" strokeWidth="3.4" />
        {mullR.map((x) => <path key={x} d={`M${x} ${lerp(glassTop, x)}V${rightBase(x)}`} strokeWidth="3" />)}
        <path d="M1019.5 394V479" strokeWidth="5" />
        <path d="M1016 420V476" stroke="#5f93b0" strokeWidth="1.6" />
        {[1057, 1075, 1092.5, 1112].map((x) => <path key={x} d={`M${x} 399V${rightBase(x)}`} strokeWidth="3.4" />)}
        <path d="M1130.5 394V467" strokeWidth="3.4" />
        <path d="M563 391 643 400 684 403.5 797 390M851 373 934 380 1019 396" strokeWidth="1.8" />
        <path d="M851 417 934 425 1019 434.5 1131 421" strokeWidth="1.8" />
        <path d="M520 433 685 448 797 436M850 464 1019 479.5 1131 467" strokeWidth="3" />
      </g>
      <path d="M702.5 364V446M935 352V470M1037.5 403V476" stroke="#000" strokeWidth="2.8" />
      <path d="M702.5 364V446M935 352V470M1037.5 403V476" stroke="#f0f4f8" strokeWidth="1.3" />

      {/* roof */}
      <polygon points={str([...seg(roofEdge, 684, 1031), [1031, 402], ...seg(glassTop, 684, 1027).reverse()])} fill="#5f6373" />
      <polygon points={str([...seg(roofTop, 477, 790), ...seg(roofEdge, 684, 790).reverse(), ...seg(glassTop, 520, 684).reverse(), [519, 429.5], [477, 433]])} fill="#5b5968" stroke="#000" />
      <polygon points={str([[760, 313], ...seg(roofTop, 780, 1173), [1173, 388], [1034, 403.5], ...seg(roofEdge, 760, 1031).reverse()])} fill="#595e6d" stroke="#000" />
      <polyline points={str([...roofEdge.slice(1), [1173, 384.5]])} fill="none" stroke="#000" />
      <polyline points={str(seg(roofEdge, 690, 1022).map(([x, y]) => [x + 1, y + 1.5] as P))} fill="none" stroke="#4a50a0" strokeDasharray="9 4" />
      <polyline points={str([...seg(roofEdge, 684, 1031).map(([x, y]) => [x, y + 3.5] as P), [1034, 403.5], [1031, 399]])} fill="none" stroke="#15161f" strokeWidth="1.2" />
      <polyline points={str(seg(glassTop, 520, 684))} fill="none" stroke="#000" strokeWidth="2.8" />
      <polyline points={str(seg(glassTop, 520, 684))} fill="none" stroke="#cfe0ee" strokeWidth="1" strokeDasharray="3 4" />

      {/* walls */}
      <g fill="#ebe3ee" stroke="#000">
        <polygon points="516.5,433 684.5,448 684.5,562.5 516.5,546" />
        <polygon points="684.5,448 799.5,436 799.5,548.5 684.5,562.5" />
        <polygon points="848.5,464 1019.5,479.5 1019.5,593.5 848.5,577" />
        <polygon points="1019.5,479.5 1134.5,467 1134.5,580.5 1019.5,593.5" />
      </g>
      <path d="M517 433 684.5 448 797 436M849 464 1019.5 479.5 1133 467" stroke="#000" strokeWidth="2.4" strokeDasharray="9 2" fill="none" />
      <path d="M520 432.500 684.5 447.500 797 435.500M852 463.500 1019.5 479 1131 466.500" stroke="#9fc4d8" strokeWidth="1" strokeDasharray="3 7" fill="none" />
      <path d="M516 546.5 685 562.5M848 577.5 1019 593.5 1134 581" stroke="#000" strokeWidth="1.600" strokeDasharray="9 2" fill="none" />
      {ports.map(([x, y]) => (
        <g key={x}>
          <ellipse cx={x} cy={y} rx="4.8" ry="6.4" fill="#77717c" stroke="#000" strokeWidth="2" />
          <ellipse cx={x + 0.8} cy={y} rx="2" ry="4" fill="#b9b3bf" stroke="#000" strokeWidth="1" />
        </g>
      ))}
      {wins.map(([x, y, w, h, c]) => (
        <g key={x}>
          <path d={`M${x} ${y}h${w}v${h}l${-w} -1.5Z`} fill={c} stroke="#000" strokeWidth="2" />
          <path d={`M${x + 3.5} ${y + 1}v${h - 3}`} stroke="#000" strokeWidth="2" />
          <path d={`M${x + 5} ${y + h * 0.6}H${x + w - 1}V${y + h - 3}H${x + 5}Z`} fill={x === 537.5 || x === 1103.5 ? c : "#5b7380"} />
          <path d={`M${x + 5} ${y + h * (x === 537.5 || x === 1103.5 ? 0.8 : 0.6)}H${x + w - 1}`} stroke="#173445" />
        </g>
      ))}
      {([[695.5, 521, 560], [764.5, 514, 551]] as number[][]).map(([x, t, b]) => (
        <g key={x}>
          <path d={`M${x} ${t}L${x + 24} ${t - 2}V${b - 3}L${x} ${b}Z`} fill="#8fb9d4" stroke="#000" strokeWidth="2" />
          <path d={`M${x + 2} ${t + 22}H${x + 9}V${b - 2}H${x + 2}Z`} fill="#5d7482" />
          <path d={`M${x + 11} ${t}V${b - 1}M${x + 21.5} ${t}V${b - 3}M${x + 2} ${t + 1.5}L${x + 22} ${t}`} stroke="#000" strokeWidth="3.6" />
          <path d={`M${x + 11.5} ${t}V${b - 1}M${x + 22} ${t}V${b - 3}`} stroke="#a18f72" strokeWidth="1.4" />
          <path d={`M${x + 15} ${t + 13}H${x + 20}M${x + 15} ${t + 30}H${x + 20}`} stroke="#173a55" strokeWidth="1.5" />
        </g>
      ))}
    </g>
  );
}

const CubeFace = styled.text`
  font-family: ${face};
  font-size: 9.5px;
  fill: #7f7884;
`;

function Scene() {
  return (
    <svg width="785" height="502" viewBox="474 172 785 502">
      <Building />
      {/* orbit cursor */}
      <g fill="none">
        <path d="M858 409A9 9 0 0 1 871 403M875.500 412A9 9 0 0 1 862 418" stroke="#1b2636" strokeWidth="3" />
        <path d="M858 409A9 9 0 0 1 871 403M875.500 412A9 9 0 0 1 862 418" stroke="#fff" strokeWidth="1.500" />
        <path d="M873 411.500H878L874.500 416Z" fill="#fff" stroke="#000" strokeWidth=".6" />
        <circle cx="866.5" cy="410.5" r="4.6" fill="#8fa6b6" stroke="#000" strokeWidth="1.300" />
        <path d="M861 410.5H872M866.5 405V416" stroke="#000" strokeWidth="1.2" />
        <rect x="864.5" y="408.5" width="4" height="4" fill="#fff" stroke="#222" strokeWidth=".8" />
      </g>
      {/* child window buttons */}
      <g fill="#fff" stroke="#57505b">
        <rect x="1208.5" y="186.5" width="11" height="3" />
        <path d="M1229.5 182.5V180.5H1236.5V188.5H1234.5" fill="none" />
        <rect x="1226.5" y="182.5" width="8" height="8" />
        <rect x="1229.5" y="185.5" width="2" height="3" />
        <path d="M1245 182H1248L1249.5 184 1251 182H1254V184L1251.5 186 1254 188.5V190.5H1251L1249.5 188.5 1248 190.5H1245V188.5L1247.5 186 1245 184Z" />
      </g>
      {/* view cube */}
      <g>
        <ellipse cx="1195.5" cy="284.5" rx="46" ry="8" fill="none" stroke="#cdc5d0" strokeDasharray="5 3" />
        <ellipse cx="1195.5" cy="284" rx="36" ry="5.5" fill="#ece5ee" stroke="#d8d0db" strokeDasharray="3 2" />
        <path d="M1155 288.500 1166 290M1226 290 1238 288.500" stroke="#b5adb9" strokeWidth="3" strokeDasharray="2 2" />
        <polygon points="1171.5,246.5 1196.5,247 1196.5,284.5 1171.5,280" fill="#ebe5ef" stroke="#b3abb7" />
        <polygon points="1196.5,247 1219.5,246.5 1219.5,280 1196.5,284.5" fill="#e5deea" stroke="#b3abb7" />
        <path d="M1171.5 246.5H1219.5M1196.5 247V284.5" stroke="#6e6773" />
        <CubeFace x="1177.5" y="268" textLength="12.5" lengthAdjust="spacingAndGlyphs">LEFT</CubeFace>
        <CubeFace x="1199.5" y="268.500" textLength="16.500" lengthAdjust="spacingAndGlyphs">FRONT</CubeFace>
      </g>
      {/* navigation bar */}
      <g fill="none" stroke="#a79fab">
        <rect x="1224" y="322" width="34" height="116" rx="4" fill="#f5eef7" stroke="#c1b9c5" strokeWidth="2" />
        <circle cx="1251" cy="328" r="3.5" />
        <path d="M1249.5 326.5 1252.5 329.5M1252.5 326.5 1249.5 329.5" />
        <path d="M1241 342.5H1251.5V352A10.5 10.5 0 1 1 1241 342.5Z" stroke="#8f8793" strokeWidth="1.3" />
        <circle cx="1241" cy="352.5" r="6" stroke="#8f8793" />
        <path d="M1236 357 1233.5 360M1246 357 1248.5 360" />
        <path d="M1228 379.5H1254" />
        <rect x="1233.5" y="388.5" width="10" height="10" fill="#b7d4ae" stroke="#7fa078" />
        <circle cx="1244" cy="398.5" r="4" fill="#f5eef7" stroke="#8f8793" strokeWidth="1.4" />
        <path d="M1247 401.5 1250 404" stroke="#8f8793" strokeWidth="1.8" />
        <path d="M1238 372.5H1243.5L1240.7 375.5ZM1238 414.5H1243.5L1240.7 417.5Z" fill="#8f8793" stroke="none" />
        <circle cx="1251" cy="431" r="3.5" />
        <path d="M1249 431H1253" />
      </g>
    </svg>
  );
}

/* ---------- data ---------- */
const tabs: [string, number][] = [["Architecture", 76], ["Structure", 65], ["Systems", 60], ["Insert", 50], ["Annotate", 64], ["Analyze", 58], ["Massing & Site", 90], ["Collaborate", 73], ["View", 44], ["Manage", 57], ["Extensions", 72], ["Modify", 53]];

type Prop = { g?: string; n?: string; v?: string; btn?: boolean; chk?: boolean; field?: boolean; dim?: boolean };
const props: Prop[] = [
  { g: "Graphics" },
  { n: "View Scale", v: "1/8\" = 1'-0\"", field: true },
  { n: "Scale Value    1:", v: "96", dim: true },
  { n: "Detail Level", v: "Fine" },
  { n: "Parts Visibility", v: "Show Original" },
  { n: "Visibility/Graphics ...", v: "Edit...", btn: true },
  { n: "Graphic Display O...", v: "Edit...", btn: true },
  { n: "Discipline", v: "Coordination" },
  { n: "Default Analysis ...", v: "None" },
  { n: "Sun Path", chk: true },
  { g: "Identity Data" },
  { n: "View Template", v: "<None>", btn: true },
  { n: "View Name", v: "{3D}" },
  { n: "Dependency", v: "Independent", dim: true },
  { n: "Title on Sheet", v: "" },
  { g: "Extents" },
  { n: "Crop View", chk: true },
  { n: "Crop Region Visible", chk: true },
  { n: "Annotation Crop", chk: true },
  { n: "Far Clip Active", chk: true, dim: true },
  { n: "Section Box", chk: true },
  { g: "Camera" },
  { n: "Rendering Settings", v: "Edit...", btn: true },
  { n: "Locked Orientation", chk: true, dim: true },
  { n: "Perspective", chk: true, dim: true },
];
const levels = ["Level 1", "Level 2", "Level 3", "Level 4", "Level 5", "Level 6"];
const tree: [string, string[]][] = [
  ["Structural Plans", levels],
  ["Floor Plans", [...levels, "Site"]],
  ["Ceiling Plans", levels],
  ["3D Views", ["{3D}"]],
  ["Elevations (Building Elevation)", ["East", "North", "South", "West"]],
];

const Item = ({ i, t, c, dim }: { i: string; t: string; c?: number; dim?: boolean }) => (
  <Small $dim={dim}>
    <Icon n={i} />
    {t}
    {c !== undefined && <Caret $l={c} />}
  </Small>
);
const BigCaret = styled(Caret)`
  margin-top: 2px;
`;
const TabCaret = styled(Caret)`
  margin-bottom: 7px;
`;
const BigItem = ({ i, t, w, l, c, on }: { i: string; t: string; w: number; l?: number; c?: boolean; on?: boolean }) => (
  <Big $w={w} $l={l} $on={on}>
    <BigIcon n={i} />
    {t}
    {c && <BigCaret />}
  </Big>
);
const Chevrons = () => (
  <svg width="7" height="8" viewBox="0 0 7 8"><path d="M.5 3.500 3.500.8 6.500 3.500M.5 7.500 3.500 4.800 6.500 7.500" fill="none" stroke="#222" strokeWidth="1.200" /></svg>
);

export default function App() {
  return (
    <Win>
      <Global />
      <TitleBar>
        <Slot $w={16}><Icon n="open" /></Slot>
        <Slot $w={16} $l={8}><Icon n="save" s={15} /></Slot>
        <Slot $w={16} $l={8}><Icon n="sync" /></Slot>
        <Caret $l={7} />
        <Slot $w={16} $l={8}><Icon n="undo" /></Slot>
        <Caret $l={7} />
        <Slot $w={16} $l={8}><Icon n="redo" /></Slot>
        <Caret $l={7} />
        <BarSep $l={8} />
        <Slot $w={16} $l={8}><Icon n="measure" /></Slot>
        <Caret $l={7} />
        <Slot $w={16} $l={9}><Icon n="dim" /></Slot>
        <Slot $w={16} $l={8}><Icon n="tag" /></Slot>
        <Slot $w={16} $l={8}><Icon n="textA" s={15} /></Slot>
        <BarSep $l={8} />
        <Slot $w={16} $l={7}><Icon n="house" /></Slot>
        <Caret $l={7} />
        <Slot $w={16} $l={8}><Icon n="section" s={15} /></Slot>
        <Slot $w={16} $l={9}><Icon n="thin" /></Slot>
        <BarSep $l={7} />
        <Slot $w={16} $l={8}><Icon n="closeWin" /></Slot>
        <Slot $w={16} $l={8}><Icon n="switchWin" /></Slot>
        <Caret $l={5} />
        <Slot $w={8} $l={10}><svg width="8" height="7" viewBox="0 0 8 7"><path d="M0 0H8V1.500H0ZM0 3H8L4 7Z" fill="#222" /></svg></Slot>
        <Title style={{ marginLeft: 49 }}>03_Begin - 3D View: {"{3D}"}</Title>
        <Slot $w={6} $l={50}><svg width="5" height="8" viewBox="0 0 5 8"><path d="M0 0 5 4 0 8Z" fill="#111" /></svg></Slot>
        <Search>Type a keyword or phrase</Search>
        <Slot $w={16} $l={5}><Icon n="binoc" /></Slot>
        <Slot $w={16} $l={7}><Icon n="key" /></Slot>
        <Slot $w={16} $l={8}><Icon n="dish" s={15} /></Slot>
        <Slot $w={16} $l={8}><Icon n="star" s={15} /></Slot>
        <Slot $w={16} $l={9}><Icon n="user" /></Slot>
        <User>subpartner@au...</User>
        <Caret />
        <Slot $w={16} $l={9}><Icon n="exchange" /></Slot>
        <BarSep $l={8} />
        <Slot $w={16} $l={9}><Icon n="help" /></Slot>
        <Caret $l={7} />
        <Slot $w={12} $l={23}><svg width="10" height="10" viewBox="0 0 10 10"><path d="M0 7H9V9H0Z" fill="#333" /></svg></Slot>
        <Slot $w={12} $l={4}><svg width="9" height="9" viewBox="0 0 9 9"><path d="M1 1.500H8V8H1Z" fill="none" stroke="#333" strokeWidth="1.400" /></svg></Slot>
        <Slot $w={12} $l={4}><Close c="#222" /></Slot>
      </TitleBar>

      <Tabs>
        {tabs.map(([t, w], i) => <Tab key={t} $w={w} $on={i === 0}>{t}</Tab>)}
        <Pill><Up /></Pill>
        <TabCaret />
      </Tabs>

      <Ribbon>
        <Panel $w={56}>
          <PanelBody><BigItem i="modify" t="Modify" w={38} l={10} on /></PanelBody>
          <PanelTitle>Select<Caret $big /></PanelTitle>
        </Panel>
        <Panel $w={438}>
          <PanelBody>
            <BigItem i="wall" t="Wall" w={40} l={2} c />
            <BigItem i="door" t="Door" w={39} />
            <BigItem i="window" t="Window" w={46} />
            <BigItem i="component" t="Component" w={76} c />
            <BigItem i="column" t="Column" w={57} c />
            <Stack $l={6} $w={67} $ls={0.1}>
              <Item i="roof" t="Roof" c={4} /><Item i="ceiling" t="Ceiling" /><Item i="floor" t="Floor" c={5} />
            </Stack>
            <Stack $l={0} $w={100} $ls={-0.25}>
              <Item i="csys" t="Curtain System" /><Item i="cgrid" t="Curtain Grid" /><Item i="mullion" t="Mullion" />
            </Stack>
          </PanelBody>
          <PanelTitle>Build</PanelTitle>
        </Panel>
        <Panel $w={79}>
          <PanelBody>
            <Stack $l={6} $w={72} $ls={0}>
              <Item i="railing" t="Railing" c={4} /><Item i="ramp" t="Ramp" /><Item i="stair" t="Stair" c={4} />
            </Stack>
          </PanelBody>
          <PanelTitle>Circulation</PanelTitle>
        </Panel>
        <Panel $w={110}>
          <PanelBody>
            <Stack $l={7} $w={100} $ls={-0.12}>
              <Item i="mtext" t="Model Text" /><Item i="mline" t="Model Line" /><Item i="mgroup" t="Model Group" c={1} />
            </Stack>
          </PanelBody>
          <PanelTitle>Model</PanelTitle>
        </Panel>
        <Panel $w={222}>
          <PanelBody>
            <Stack $l={7} $w={112}>
              <Item i="room" t="Room" dim /><Item i="roomsep" t="Room Separator" /><Item i="tagroom" t="Tag Room" c={7} />
            </Stack>
            <Stack $l={0} $w={98} $ls={-0.12}>
              <Item i="area" t="Area" c={4} /><Item i="areab" t="Area Boundary" dim /><Item i="tagarea" t="Tag Area" c={7} />
            </Stack>
          </PanelBody>
          <PanelTitle>Room &amp; Area<Caret $big /></PanelTitle>
        </Panel>
        <Panel $w={147}>
          <PanelBody>
            <BigItem i="byface" t={"By\nFace"} w={40} l={1} />
            <BigItem i="shaft" t="Shaft" w={38} />
            <Stack $l={5} $w={62}>
              <Item i="owall" t="Wall" /><Item i="overt" t="Vertical" /><Item i="dormer" t="Dormer" />
            </Stack>
          </PanelBody>
          <PanelTitle>Opening</PanelTitle>
        </Panel>
        <Panel $w={62}>
          <PanelBody>
            <Stack $l={8} $w={50} $t={16}>
              <Item i="level" t="Level" dim /><Item i="grid" t="Grid" dim />
            </Stack>
          </PanelBody>
          <PanelTitle>Datum</PanelTitle>
        </Panel>
        <Panel $w={123}>
          <PanelBody>
            <BigItem i="set" t="Set" w={40} l={1} />
            <Stack $l={5} $w={72} $ls={-0.05}>
              <Item i="show" t="Show" /><Item i="refp" t="Ref Plane" dim /><Item i="viewer" t="Viewer" />
            </Stack>
          </PanelBody>
          <PanelTitle>Work Plane</PanelTitle>
        </Panel>
      </Ribbon>
      <OptionStrip />

      <Work>
        <Dock $w={234}>
          <DockHead>Properties<Close /></DockHead>
          <TypeBox>
            <Thumb>
              <svg width="32" height="32" viewBox="0 0 32 32">
                <path d="M4 15V24L16 30 28 24V13L19 3 8 8Z" fill="#f2edf5" stroke="#6d6672" />
                <path d="M16 18.500 28 13V24L16 30Z" fill="#dcd6e1" />
                <path d="M8 8 19 1.500 30 12.500 16.500 19Z" fill="#d2ccd8" stroke="#57505b" strokeWidth="1.200" />
                <path d="M8 8 2 14.500" stroke="#57505b" strokeWidth="1.600" />
                <path d="M7 18 11 19.500V27.500L7 25.500Z" fill="#5c5663" />
              </svg>
            </Thumb>
            <span>3D View</span>
            <Caret $big />
          </TypeBox>
          <TypeRow>
            <Combo $w={145}>3D View: {"{3D}"}<Drop><Caret $big $c="#000" /></Drop></Combo>
            <Icon n="etype" /><TypeLabel>Edit Type</TypeLabel>
          </TypeRow>
          <GridArea>
            <Sheet>
              {props.map((p, i) =>
                p.g ? (
                  <Group key={i}>{p.g}<Chevrons /></Group>
                ) : (
                  <Row key={i} $dim={p.dim}>
                    <Name>{p.n}</Name>
                    <Value>
                      {p.btn ? <ValueButton>{p.v}</ValueButton> : p.field ? <ValueField>{p.v}</ValueField> : p.chk ? <Check $dim={p.dim} /> : p.v}
                    </Value>
                  </Row>
                )
              )}
            </Sheet>
            <Bar v size={15} before={1} len={270} />
          </GridArea>
          <DockFoot><a>Properties help</a><Apply>Apply</Apply></DockFoot>
        </Dock>

        <Dock $w={226}>
          <DockHead>Project Browser - 03_Begin<Close /></DockHead>
          <TreeBox>
            <TreeMain>
              <TreeList>
                <Node><Box $l={4} /><Arm $w={7} /><Icon n="views" /><Leaf $root>Views (all)</Leaf></Node>
                {tree.map(([name, kids], gi) => (
                  <React.Fragment key={name}>
                    <Parent><Box $l={24} /><Arm $w={10} /><Leaf>{name}</Leaf></Parent>
                    {kids.map((k, ki) => (
                      <Node key={k}>
                        <Guide $w={18} $x={8} />
                        <Guide $w={20} $x={10} />
                        <Guide $w={25} $x={10} $arm $end={ki === kids.length - 1} />
                        <Leaf $sel={gi === 0 && ki === 0} $bold={k === "{3D}"}>{k}</Leaf>
                      </Node>
                    ))}
                  </React.Fragment>
                ))}
              </TreeList>
              <Bar v size={16} before={1} len={295} />
            </TreeMain>
            <TreeFoot><Bar size={15} before={1} len={165} /><Gap $n={16} /></TreeFoot>
          </TreeBox>
        </Dock>

        <View>
          <ViewMain>
            <Canvas><Scene /></Canvas>
            <Bar v size={16} before={228} len={17} />
          </ViewMain>
          <ViewBar>
            <ScaleText>1/8" = 1'-0"</ScaleText>
            {["hatch", "cube", "sun", "shadow", "teapot", "crop", "cropb", "lock", "glasses", "bulb", "marquee", "analytic", "displace"].map((n) => (
              <Slot key={n} $w={20.9}><Icon n={n} /></Slot>
            ))}
            <Bar size={16} before={194} len={16} />
            <Slot $w={17}><svg width="12" height="12" viewBox="0 0 12 12"><path d="M1 12 12 1M5 12 12 5M9 12 12 9" stroke="#7d7581" /></svg></Slot>
          </ViewBar>
        </View>
      </Work>

      <Status>
        <Well $w={486}>Hold button and move mouse to Spin the View.</Well>
        <Slot $w={16} $l={6}><Icon n="worksets" /></Slot>
        <Slot $w={205} $l={8}><Combo $w={205} $h={20} $dim><span /><Drop><Caret $big $c="#857d88" /></Drop></Combo></Slot>
        <Slot $w={16} $l={8}><Icon n="editreq" /></Slot>
        <Slot $w={12} $l={3}>:0</Slot>
        <Slot $w={16} $l={22}><Icon n="options" /></Slot>
        <Slot $w={16} $l={9}><Icon n="addopt" /></Slot>
        <Slot $w={155} $l={8}><Combo $w={155} $h={20} $dim>Main Model<Drop><Caret $big $c="#857d88" /></Drop></Combo></Slot>
        <Well $w={116} $l={3} />
        <Well $w={97} $l={2} />
        <Slot $w={16} $l={6}><Icon n="links" /></Slot>
        <Slot $w={16} $l={10}><Icon n="under" /></Slot>
        <Slot $w={14} $l={6}><svg width="12" height="14" viewBox="0 0 12 14"><path d="M0 14 12 2M4 14 12 6M8 14 12 10" stroke="#7d7581" /></svg></Slot>
      </Status>

      <AppButton>
        <svg width="30" height="34" viewBox="0 0 30 34">
          <path d="M6 8 17 3 22 8 20 18 14 20 9 15Z" fill="#1c3a8c" />
          <path d="M6 8 12 10 11 30 5 29Z" fill="#1b3580" />
          <path d="M11 15 17 17 26 28 19 30Z" fill="#2448a6" />
          <path d="M12 10 17 3 22 8 16 16Z" fill="#14255c" />
        </svg>
        <Caret $big $c="#4b444e" />
      </AppButton>
    </Win>
  );
}
